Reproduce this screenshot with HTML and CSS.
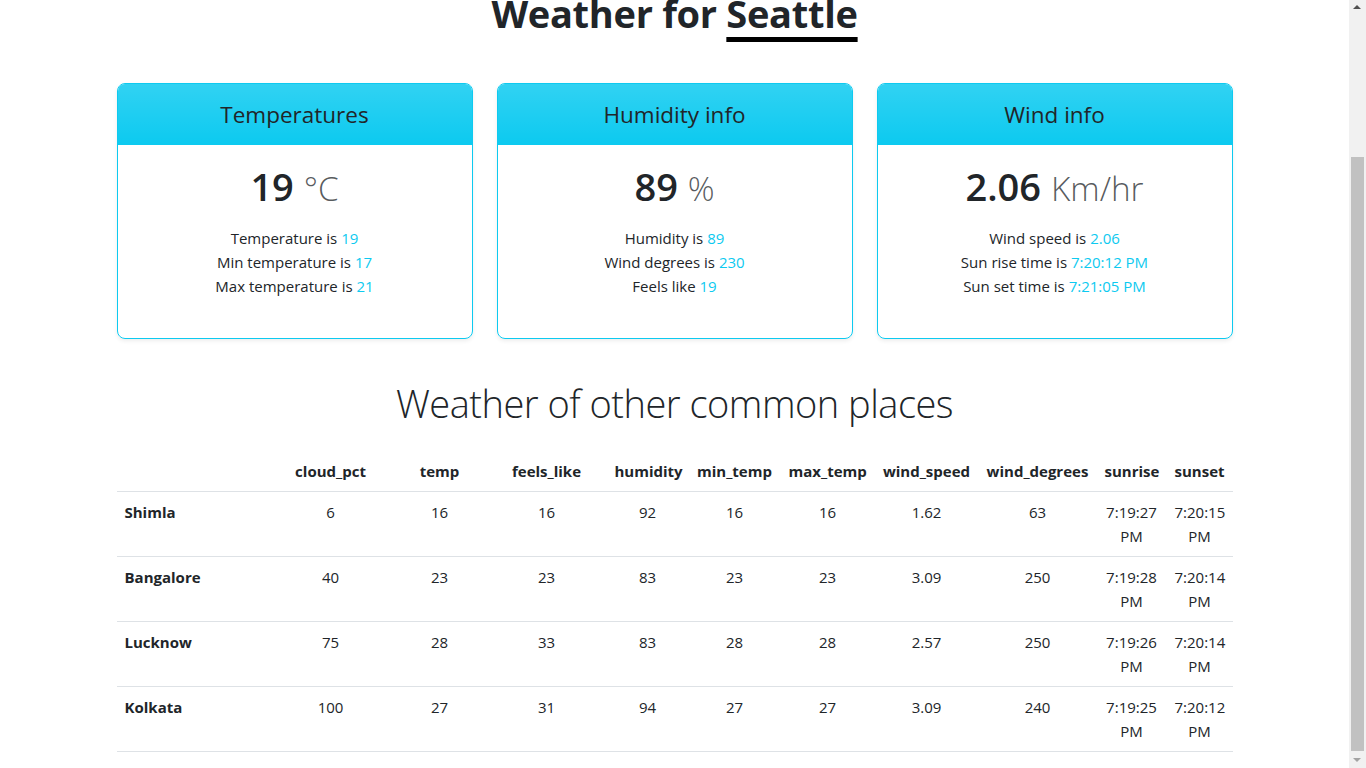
FILE: index.html
```html
<!DOCTYPE html>
<html lang="en">
<head>
<meta charset="utf-8">
<title>Weather App</title>
<link rel="stylesheet" href="styles.css">
</head>
<body>
<header class="topbar">
  <div class="container topbar-inner">
    <a class="brand" href="#">Weather App</a>
    <nav class="nav">
      <a href="#">Home</a>
      <a href="#">About</a>
      <a href="#">Contact</a>
    </nav>
    <form class="search">
      <input type="search" placeholder="Search city">
      <button type="button">Search</button>
    </form>
  </div>
</header>

<main class="container">
  <h1 class="page-title">Weather for <span class="city">Seattle</span></h1>

  <div class="cards">
    <div class="card">
      <div class="card-header"><h4>Temperatures</h4></div>
      <div class="card-body">
        <h1 class="card-value">19 <small>°C</small></h1>
        <ul class="facts">
          <li>Temperature is <span class="val">19</span></li>
          <li>Min temperature is <span class="val">17</span></li>
          <li>Max temperature is <span class="val">21</span></li>
        </ul>
      </div>
    </div>
    <div class="card">
      <div class="card-header"><h4>Humidity info</h4></div>
      <div class="card-body">
        <h1 class="card-value">89 <small>%</small></h1>
        <ul class="facts">
          <li>Humidity is <span class="val">89</span></li>
          <li>Wind degrees is <span class="val">230</span></li>
          <li>Feels like <span class="val">19</span></li>
        </ul>
      </div>
    </div>
    <div class="card">
      <div class="card-header"><h4>Wind info</h4></div>
      <div class="card-body">
        <h1 class="card-value">2.06 <small>Km/hr</small></h1>
        <ul class="facts">
          <li>Wind speed is <span class="val">2.06</span></li>
          <li>Sun rise time is <span class="val">7:20:12 PM</span></li>
          <li>Sun set time is <span class="val">7:21:05 PM</span></li>
        </ul>
      </div>
    </div>
  </div>

  <h1 class="section-title">Weather of other common places</h1>

  <table class="places">
    <colgroup>
      <col class="c-city"><col class="c-cloud"><col class="c-temp"><col class="c-feels">
      <col class="c-hum"><col class="c-min"><col class="c-max"><col class="c-wspd">
      <col class="c-wdeg"><col class="c-rise"><col class="c-set">
    </colgroup>
    <thead>
      <tr>
        <th></th><th>cloud_pct</th><th>temp</th><th>feels_like</th><th>humidity</th><th>min_temp</th><th>max_temp</th><th>wind_speed</th><th>wind_degrees</th><th>sunrise</th><th>sunset</th>
      </tr>
    </thead>
    <tbody>
      <tr>
        <th>Shimla</th><td>6</td><td>16</td><td>16</td><td>92</td><td>16</td><td>16</td><td>1.62</td><td>63</td><td>7:19:27 PM</td><td>7:20:15 PM</td>
      </tr>
      <tr>
        <th>Bangalore</th><td>40</td><td>23</td><td>23</td><td>83</td><td>23</td><td>23</td><td>3.09</td><td>250</td><td>7:19:28 PM</td><td>7:20:14 PM</td>
      </tr>
      <tr>
        <th>Lucknow</th><td>75</td><td>28</td><td>33</td><td>83</td><td>28</td><td>28</td><td>2.57</td><td>250</td><td>7:19:26 PM</td><td>7:20:14 PM</td>
      </tr>
      <tr>
        <th>Kolkata</th><td>100</td><td>27</td><td>31</td><td>94</td><td>27</td><td>27</td><td>3.09</td><td>240</td><td>7:19:25 PM</td><td>7:20:12 PM</td>
      </tr>
    </tbody>
  </table>
</main>

<div class="scrollbar" aria-hidden="true">
  <span class="sb-arrow sb-up"></span>
  <span class="sb-space"></span>
  <span class="sb-thumb"></span>
  <span class="sb-arrow sb-down"></span>
</div>
<script src="script.js"></script>
</body>
</html>
```

FILE: styles.css
```css
* { box-sizing: border-box; }

body {
  margin: 0;
  padding-right: 17px;
  font-family: "Open Sans", "Segoe UI", "Liberation Sans", sans-serif;
  font-size: 15px;
  line-height: 24px;
  color: #212529;
  background: #fff;
}

.container {
  width: 1140px;
  margin: 0 auto;
  padding: 0 12px;
}

/* top bar (scrolled out of view) */
.topbar { border-bottom: 1px solid #dee2e6; }
.topbar-inner {
  display: flex;
  align-items: center;
  justify-content: space-between;
  height: 72px;
}
.brand { font-size: 20px; font-weight: 600; color: #212529; text-decoration: none; }
.nav { display: flex; gap: 24px; }
.nav a { color: #0d6efd; text-decoration: none; }
.search { display: flex; gap: 8px; }
.search input {
  font: inherit; padding: 6px 12px; border: 1px solid #dee2e6; border-radius: 6px;
}
.search button {
  font: inherit; padding: 6px 12px; border: 1px solid #0dcaf0; background: #0dcaf0; border-radius: 6px;
}

/* title */
.page-title {
  margin: 96px 0 46px;
  font-size: 38px;
  font-weight: 700;
  line-height: 48px;
  letter-spacing: -0.3px;
  text-align: center;
}
.city {
  text-decoration: underline;
  text-decoration-color: #000;
  text-decoration-thickness: 5px;
  text-underline-offset: 9px;
}

/* cards */
.cards {
  display: grid;
  grid-template-columns: repeat(3, 1fr);
  gap: 24px;
  margin-bottom: 40px;
}
.card {
  border: 1px solid #0dcaf0;
  border-radius: 8px;
  overflow: hidden;
  box-shadow: 0 2px 4px rgba(0, 0, 0, .075);
  text-align: center;
}
.card-header {
  padding: 17px 16px 14px;
  background: #0dcaf0 linear-gradient(180deg, rgba(255, 255, 255, .15), rgba(255, 255, 255, 0));
  border-bottom: 1px solid #0dcaf0;
}
.card-header h4 {
  margin: 0;
  font-size: 22.5px;
  font-weight: 400;
  line-height: 28.8px;
  color: #212529;
}
.card-body { padding: 16px; }
.card-value {
  margin: 1px 0 14px;
  font-size: 38px;
  font-weight: 600;
  line-height: 48px;
}
.card-value small {
  font-size: .875em;
  font-weight: 300;
  color: rgba(33, 37, 41, .75);
}
.facts {
  list-style: none;
  margin: 0 0 24px;
  padding: 0;
}
.val { color: #0dcaf0; }

/* other places */
.section-title {
  margin: 0 0 24px;
  font-size: 38px;
  font-weight: 300;
  line-height: 48px;
  letter-spacing: -0.5px;
  text-align: center;
}

.places {
  width: 100%;
  border-collapse: collapse;
  table-layout: fixed;
  margin-bottom: 16px;
  text-align: center;
}
.places th,
.places td {
  padding: 8px;
  border-bottom: 1px solid #dee2e6;
  vertical-align: top;
}
.places th { font-weight: 700; }
.places tbody th { text-align: left; }

.c-city { width: 152px; }
.c-cloud { width: 124px; }
.c-temp { width: 94px; }
.c-feels { width: 120px; }
.c-hum { width: 82px; }
.c-min { width: 92px; }
.c-max { width: 94px; }
.c-wspd { width: 104px; }
.c-wdeg { width: 118px; }
.c-rise { width: 70px; }
.c-set { width: 66px; }

/* window scrollbar as seen in the capture */
.scrollbar {
  position: fixed;
  top: 0;
  right: 0;
  width: 17px;
  height: 100vh;
  background: #f1f1f1;
  display: flex;
  flex-direction: column;
  align-items: center;
}
.sb-arrow {
  flex: 0 0 17px;
  width: 17px;
  position: relative;
}
.sb-arrow::after {
  content: "";
  position: absolute;
  left: 4px;
  width: 0;
  height: 0;
  border-left: 4px solid transparent;
  border-right: 4px solid transparent;
}
.sb-up::after { top: 5px; border-bottom: 4px solid #505050; }
.sb-down::after { bottom: 6px; border-top: 4px solid #a3a3a3; }
.sb-space { flex: 1 1 auto; }
.sb-thumb {
  flex: 0 0 594px;
  width: 13px;
  background: #c1c1c1;
}
```

FILE: script.js
```js
function scrollToBottom() {
  window.scrollTo(0, document.documentElement.scrollHeight);
}
scrollToBottom();
window.addEventListener('load', scrollToBottom);
```
